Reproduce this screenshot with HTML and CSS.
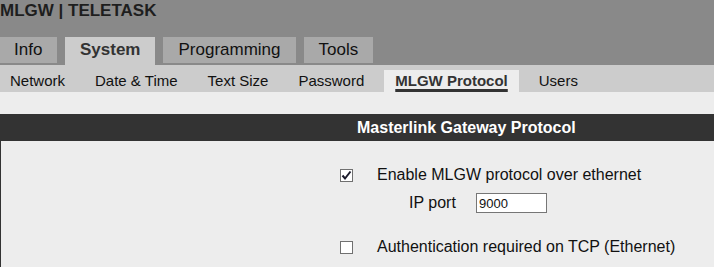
FILE: index.html
```html
<!DOCTYPE html>
<html lang="en">
<head>
    <meta charset="UTF-8">
    <meta name="viewport" content="width=device-width, initial-scale=1.0">
    <title>MLGW | TELETASK</title>
    <link rel="stylesheet" href="styles.css">
</head>
<body>
    <header class="top">
        <div class="brand">MLGW | TELETASK</div>
        <nav class="tabs">
            <a class="tab tab-first" href="#">Info</a>
            <a class="tab active" href="#">System</a>
            <a class="tab" href="#">Programming</a>
            <a class="tab" href="#">Tools</a>
        </nav>
    </header>

    <nav class="subnav">
        <a class="sub-item" href="#">Network</a>
        <a class="sub-item" href="#">Date &amp; Time</a>
        <a class="sub-item" href="#">Text Size</a>
        <a class="sub-item" href="#">Password</a>
        <a class="sub-item active" href="#"><span>MLGW Protocol</span></a>
        <a class="sub-item" href="#">Users</a>
    </nav>

    <main class="page">
        <section class="panel">
            <h2 class="panel-title">Masterlink Gateway Protocol</h2>
            <div class="panel-body">
                <label class="opt">
                    <span class="box">
                        <svg width="11" height="11" viewBox="0 0 11 11">
                            <path d="M1.5 5.5 L4 8.5 L9.5 1.5" fill="none" stroke="#1a1a2a" stroke-width="2"/>
                        </svg>
                    </span>
                    <span class="opt-text">Enable MLGW protocol over ethernet</span>
                </label>
                <div class="port-row">
                    <span class="port-label">IP port</span>
                    <input class="port-input" type="text" value="9000">
                </div>
                <label class="opt opt-last">
                    <span class="box"></span>
                    <span class="opt-text">Authentication required on TCP (Ethernet)</span>
                </label>
            </div>
        </section>
    </main>
</body>
</html>
```

FILE: styles.css
```css
* {
    margin: 0;
    padding: 0;
    box-sizing: border-box;
}

body {
    background: #ededed;
    color: #111;
    font-family: "Liberation Sans", Arial, sans-serif;
    width: 714px;
    height: 267px;
    overflow: hidden;
}

a {
    color: inherit;
    text-decoration: none;
}

.top {
    background: #898989;
    height: 65px;
}

.brand {
    font-size: 17px;
    font-weight: bold;
    line-height: 22px;
    color: #1e1e1e;
}

.tabs {
    display: flex;
    align-items: flex-start;
    gap: 8px;
    margin-top: 15px;
}

.tab {
    display: block;
    height: 26px;
    line-height: 26px;
    padding: 0 15px;
    font-size: 17px;
    background: #a9a9a9;
    color: #111;
}

.tab-first {
    padding: 0 14px 0 14px;
    width: 57px;
}

.tab.active {
    height: 28px;
    background: #cccccc;
    font-weight: bold;
    color: #333;
}

.subnav {
    display: flex;
    gap: 10px;
    background: #cccccc;
    height: 27px;
    padding-top: 5px;
}

.sub-item {
    display: block;
    height: 22px;
    line-height: 22px;
    padding: 0 10px;
    font-size: 15px;
    color: #111;
}

.sub-item.active {
    background: #ededed;
    height: 23px;
    padding: 0 11px;
    font-weight: bold;
    color: #333;
}

.sub-item.active span {
    text-decoration: underline;
    text-decoration-thickness: 3px;
    text-underline-offset: 3px;
}

.page {
    padding-top: 22px;
}

.panel-title {
    background: #333333;
    color: #ffffff;
    font-size: 16px;
    font-weight: bold;
    height: 27px;
    line-height: 27px;
    padding-left: 357px;
}

.panel-body {
    border-left: 1px solid #333333;
    padding: 24px 0 20px 339px;
}

.opt {
    display: flex;
    align-items: center;
    height: 20px;
    font-size: 16px;
    line-height: 20px;
}

.opt-last {
    margin-top: 24px;
}

.box {
    width: 13px;
    height: 13px;
    border: 1px solid #707070;
    background: #ffffff;
    display: flex;
    align-items: center;
    justify-content: center;
    margin-right: 24px;
}

.opt-text {
    color: #111;
}

.port-row {
    display: flex;
    align-items: center;
    height: 20px;
    margin-top: 8px;
    padding-left: 69px;
    font-size: 16px;
}

.port-label {
    width: 67px;
}

.port-input {
    width: 71px;
    height: 20px;
    border: 1px solid #767676;
    background: #ffffff;
    font-family: "Liberation Sans", Arial, sans-serif;
    font-size: 13px;
    padding: 0 2px;
    color: #111;
}
```
